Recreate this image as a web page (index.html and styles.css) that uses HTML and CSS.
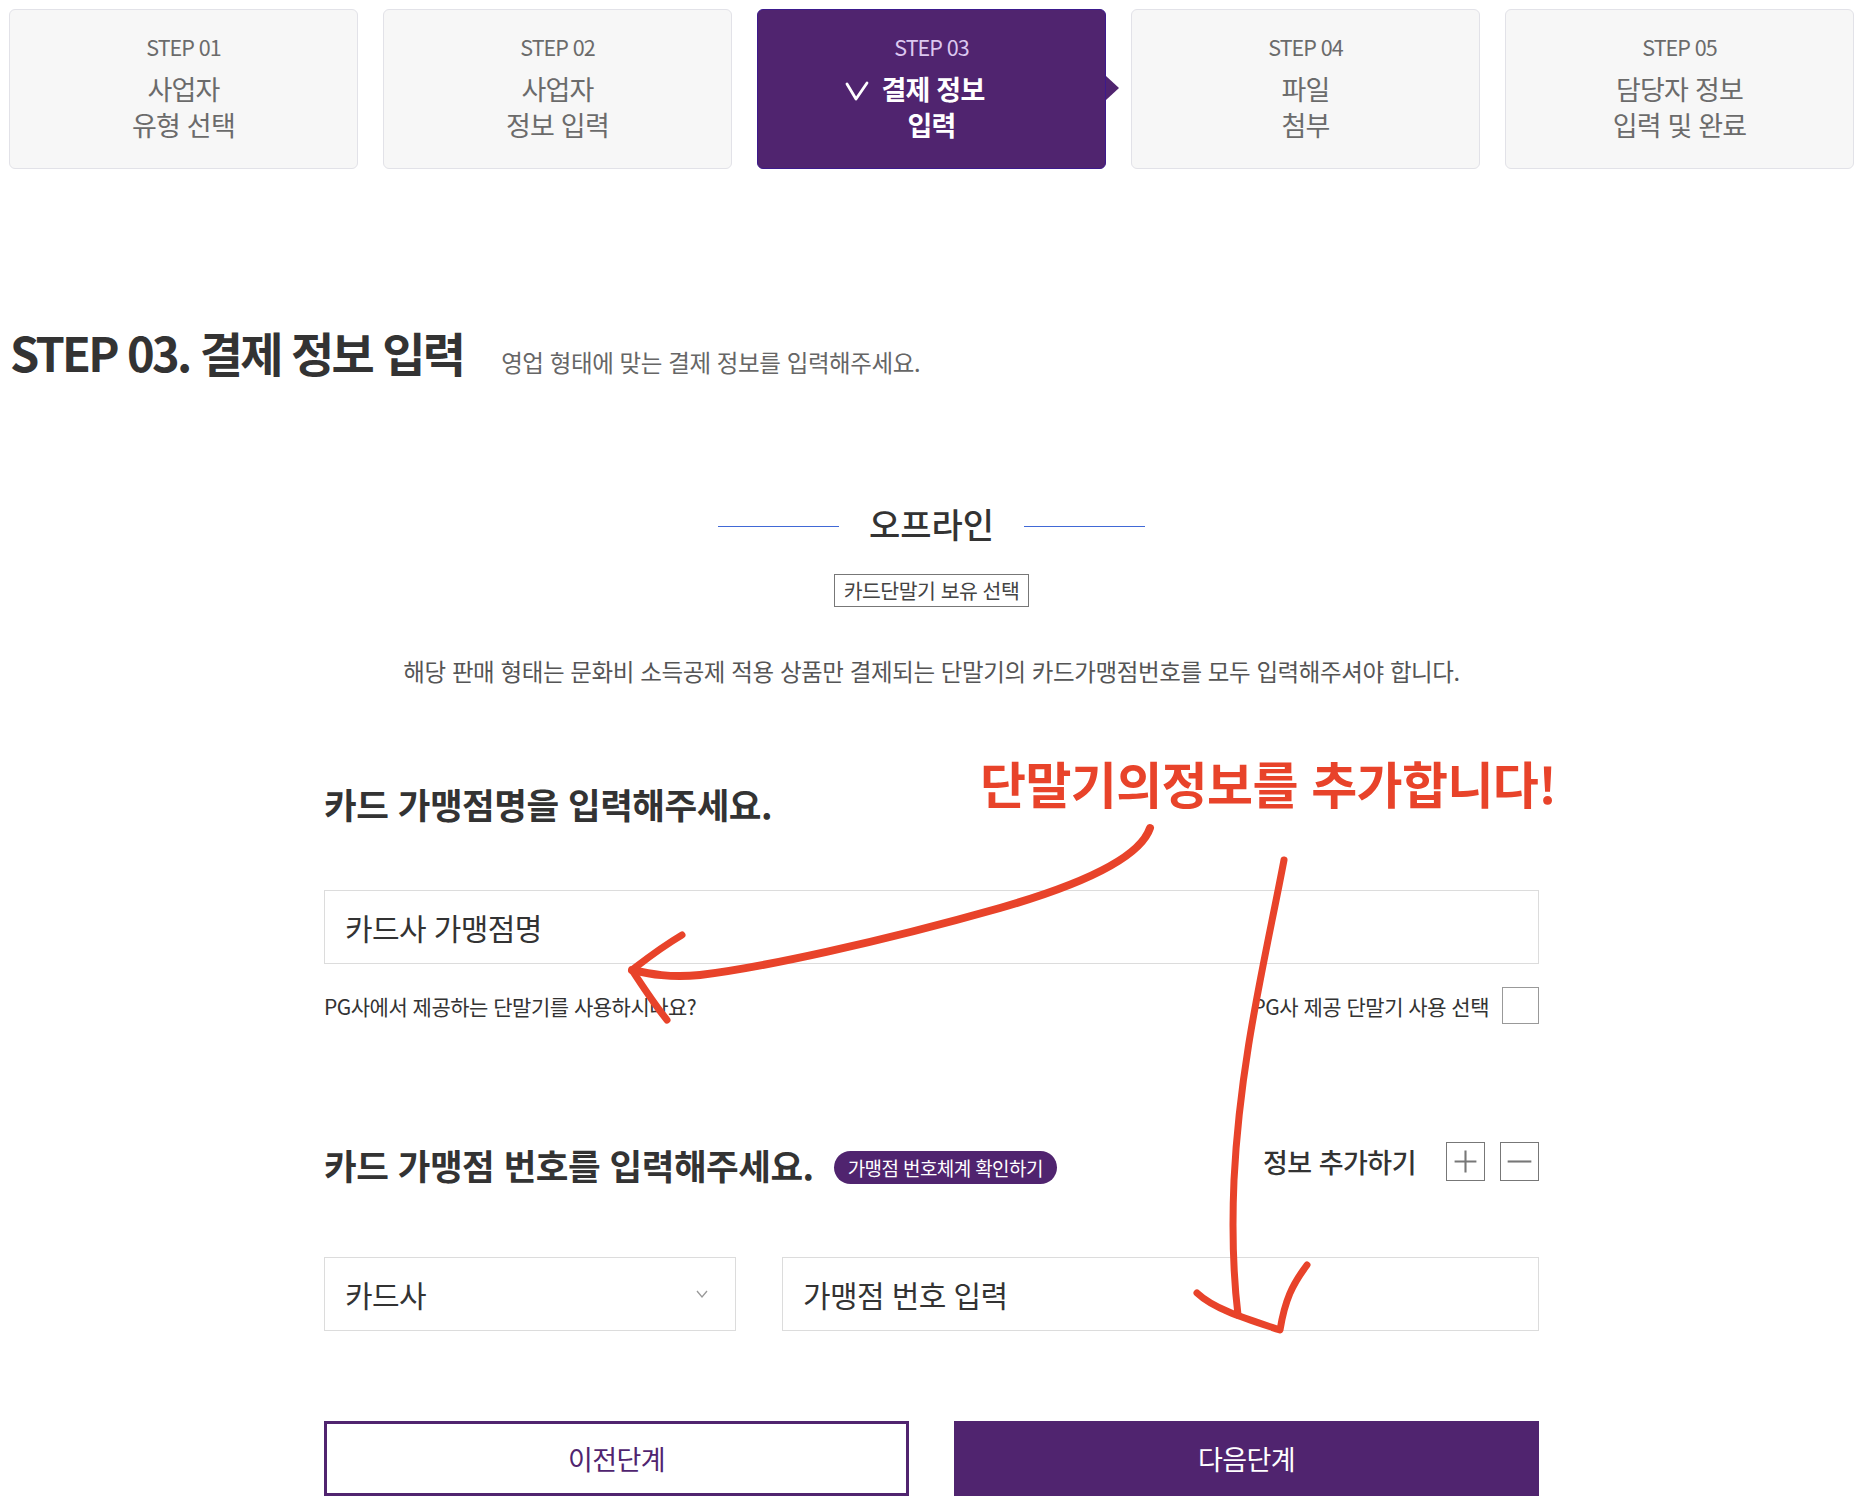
FILE: index.html
```html
<!DOCTYPE html>
<html lang="ko">
<head>
<meta charset="utf-8">
<title>STEP 03. 결제 정보 입력</title>
<link rel="stylesheet" href="styles.css">
</head>
<body>
<div class="page">
  <ol class="steps">
    <li class="step"><span class="step-no">STEP 01</span><span class="step-name">사업자<br>유형 선택</span></li>
    <li class="step"><span class="step-no">STEP 02</span><span class="step-name">사업자<br>정보 입력</span></li>
    <li class="step step-active"><span class="step-no">STEP 03</span><span class="step-name"><svg class="check" viewBox="0 0 24 20" width="24" height="20"><polyline points="2,3 11,18 22,2" fill="none" stroke="#fff" stroke-width="2.8" stroke-linejoin="round" stroke-linecap="round"/></svg>결제 정보<br>입력</span></li>
    <li class="step"><span class="step-no">STEP 04</span><span class="step-name">파일<br>첨부</span></li>
    <li class="step"><span class="step-no">STEP 05</span><span class="step-name">담당자 정보<br>입력 및 완료</span></li>
  </ol>

  <div class="page-head">
    <h1 class="page-title">STEP 03. 결제 정보 입력</h1>
    <p class="page-desc">영업 형태에 맞는 결제 정보를 입력해주세요.</p>
  </div>

  <section class="section">
    <div class="section-title"><span class="rule"></span><h2>오프라인</h2><span class="rule"></span></div>
    <div class="tag">카드단말기 보유 선택</div>
    <p class="notice">해당 판매 형태는 문화비 소득공제 적용 상품만 결제되는 단말기의 카드가맹점번호를 모두 입력해주셔야 합니다.</p>

    <div class="form">
      <h3 class="form-title">카드 가맹점명을 입력해주세요.</h3>
      <div class="field field-full">카드사 가맹점명</div>
      <div class="pg-row">
        <span class="pg-q">PG사에서 제공하는 단말기를 사용하시나요?</span>
        <label class="pg-check"><span>PG사 제공 단말기 사용 선택</span><span class="box"></span></label>
      </div>

      <div class="num-head">
        <div class="num-left">
          <h3 class="form-title">카드 가맹점 번호를 입력해주세요.</h3>
          <span class="badge">가맹점 번호체계 확인하기</span>
        </div>
        <div class="num-right">
          <span class="add-label">정보 추가하기</span>
          <span class="sq-btn"><svg viewBox="0 0 39 39" width="39" height="39"><path d="M8 19.5H31M19.5 8V31" stroke="#777" stroke-width="2.2"/></svg></span>
          <span class="sq-btn"><svg viewBox="0 0 39 39" width="39" height="39"><path d="M7 19.5H32" stroke="#777" stroke-width="2.2"/></svg></span>
        </div>
      </div>

      <div class="num-row">
        <div class="field field-select">카드사<svg class="chev" viewBox="0 0 14 10" width="14" height="10"><polyline points="2,2 7,8 12,2" fill="none" stroke="#999" stroke-width="1.3"/></svg></div>
        <div class="field field-num">가맹점 번호 입력</div>
      </div>

      <div class="actions">
        <button class="btn btn-prev">이전단계</button>
        <button class="btn btn-next">다음단계</button>
      </div>
    </div>
  </section>

  <div class="annot">단말기의정보를 추가합니다!</div>
  <svg class="annot-arrows" viewBox="0 0 1862 1504" width="1862" height="1504">
    <g fill="none" stroke="#e8432a" stroke-width="7" stroke-linecap="round" stroke-linejoin="round">
      <path d="M1150 828 C1140 858 1080 885 1000 908 C880 942 760 968 700 975 C670 978 650 974 632 970" stroke-width="8"/>
      <path d="M682 935 C660 948 645 960 632 970 C645 990 655 1005 667 1020"/>
      <path d="M1284 860 C1265 960 1240 1060 1234 1180 C1231 1250 1235 1290 1238 1315"/>
      <path d="M1197 1293 C1215 1310 1250 1320 1280 1330 C1285 1300 1292 1285 1307 1265"/>
    </g>
  </svg>
</div>
</body>
</html>
```

FILE: styles.css
```css
* { box-sizing: border-box; }
html, body { margin: 0; padding: 0; background: #fff; }
body {
  font-family: "Noto Sans CJK KR", "Noto Sans", sans-serif;
  color: #333;
}
.page {
  position: relative;
  width: 1862px;
  height: 1504px;
  padding: 9px 8px 0 9px;
  overflow: hidden;
}

/* steps */
.steps {
  list-style: none;
  margin: 0;
  padding: 0;
  display: flex;
  gap: 25px;
}
.step {
  position: relative;
  flex: 1;
  height: 160px;
  border: 1px solid #e2e2e8;
  border-radius: 6px;
  background: #f7f7f7;
  display: flex;
  flex-direction: column;
  align-items: center;
  padding-top: 23px;
  text-align: center;
  color: #6b6b6b;
}
.step-no {
  font-size: 21.5px;
  letter-spacing: -1px;
  line-height: 28px;
}
.step-name {
  margin-top: 10px;
  font-size: 27px;
  letter-spacing: -0.8px;
  line-height: 36px;
}
.step-active {
  background: #50246f;
  border-color: #3c1a8c;
  color: #fff;
}
.step-active .step-no { color: #dcc8f0; }
.step-active .step-name { font-weight: 700; }
.step-active::after {
  content: "";
  position: absolute;
  right: -14px;
  top: 66px;
  border-left: 13px solid #50246f;
  border-top: 12px solid transparent;
  border-bottom: 12px solid transparent;
}
.check {
  margin-right: 13px;
  margin-left: -34px;
  vertical-align: -1px;
}

/* page head */
.page-head {
  display: flex;
  align-items: baseline;
  gap: 38px;
  margin-top: 155px;
  padding-left: 1px;
}
.page-title {
  margin: 0;
  font-size: 47px;
  font-weight: 700;
  letter-spacing: -2.8px;
  line-height: 55px;
  color: #333;
}
.page-desc {
  margin: 0;
  font-size: 23.5px;
  letter-spacing: -0.4px;
  color: #666;
}

/* section */
.section {
  display: flex;
  flex-direction: column;
  align-items: center;
  margin-top: 123px;
}
.section-title {
  display: flex;
  align-items: center;
  gap: 30px;
}
.section-title h2 {
  margin: 0;
  font-size: 34px;
  font-weight: 500;
  letter-spacing: 0;
  line-height: 44px;
  color: #333;
}
.rule {
  width: 121px;
  height: 1px;
  background: #4169d6;
  margin-top: 4px;
}
.tag {
  margin-top: 28px;
  height: 33px;
  padding: 0 9px;
  border: 1px solid #777;
  font-size: 20.5px;
  line-height: 31px;
  letter-spacing: -0.5px;
  color: #444;
}
.notice {
  margin: 49px 0 0;
  font-size: 23.5px;
  letter-spacing: -0.4px;
  line-height: 30px;
  color: #555;
}

/* form */
.form {
  width: 1215px;
  margin-top: 96px;
  display: flex;
  flex-direction: column;
}
.form-title {
  margin: 0;
  font-size: 35.5px;
  font-weight: 700;
  letter-spacing: -0.5px;
  line-height: 44px;
  color: #333;
}
.field {
  height: 74px;
  border: 1px solid #dcdcdc;
  background: #fff;
  padding: 0 20px;
  display: flex;
  align-items: center;
  font-size: 30px;
  letter-spacing: -0.6px;
  color: #333;
}
.field-full { margin-top: 64px; }
.pg-row {
  margin-top: 23px;
  display: flex;
  justify-content: space-between;
  align-items: center;
  height: 37px;
}
.pg-q {
  font-size: 21px;
  letter-spacing: -0.5px;
  color: #333;
}
.pg-check {
  display: flex;
  align-items: center;
  gap: 13px;
  font-size: 21px;
  letter-spacing: -0.5px;
  color: #333;
}
.pg-check .box {
  width: 37px;
  height: 37px;
  border: 1px solid #999;
  background: #fff;
}

.num-head {
  margin-top: 119px;
  display: flex;
  justify-content: space-between;
  align-items: center;
  height: 44px;
}
.num-left {
  display: flex;
  align-items: center;
  gap: 20px;
}
.badge {
  height: 33px;
  padding: 0 14px;
  border-radius: 17px;
  background: #50246f;
  color: #fff;
  font-size: 19px;
  letter-spacing: -0.6px;
  line-height: 33px;
  margin-top: 4px;
}
.num-right {
  display: flex;
  align-items: center;
  margin-top: -8px;
}
.add-label {
  font-size: 27px;
  font-weight: 500;
  letter-spacing: -0.5px;
  color: #333;
  margin-right: 15px;
}
.sq-btn {
  width: 39px;
  height: 39px;
  border: 1px solid #777;
  display: flex;
  align-items: center;
  justify-content: center;
  margin-left: 15px;
}
.sq-btn svg { display: block; }
.num-row {
  margin-top: 70px;
  display: flex;
  gap: 46px;
}
.field-select {
  width: 412px;
  justify-content: space-between;
  padding-right: 26px;
}
.chev { display: block; }
.field-num { flex: 1; }

.actions {
  margin-top: 90px;
  display: flex;
  gap: 45px;
}
.btn {
  flex: 1;
  height: 75px;
  font-family: inherit;
  font-size: 27px;
  letter-spacing: -0.6px;
  border: 3px solid #50246f;
  cursor: pointer;
}
.btn-prev { background: #fff; color: #50246f; }
.btn-next { background: #50246f; color: #fff; }

/* annotation overlay */
.annot {
  position: absolute;
  left: 980px;
  top: 752px;
  font-size: 50px;
  font-weight: 700;
  letter-spacing: -0.6px;
  line-height: 60px;
  color: #e8432a;
  white-space: nowrap;
}
.annot-arrows {
  position: absolute;
  left: 0;
  top: 0;
  pointer-events: none;
}
```
